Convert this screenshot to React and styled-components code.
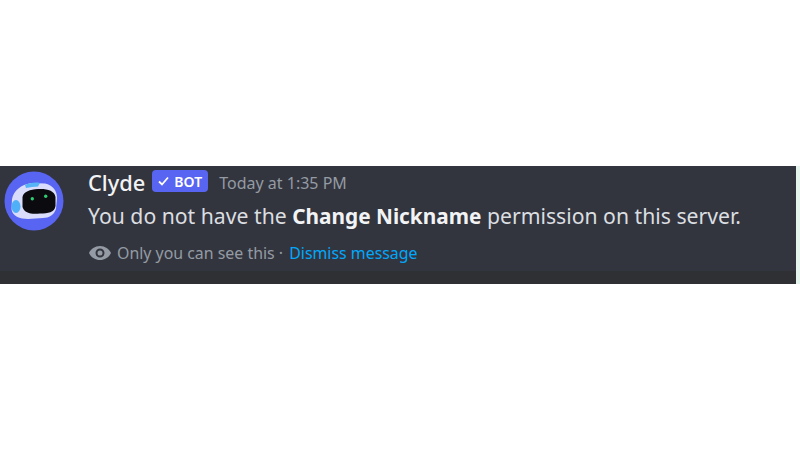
import React from 'react';
import styled, { createGlobalStyle } from 'styled-components';

const GlobalStyle = createGlobalStyle`
    html, body {
        margin: 0;
        padding: 0;
        background: #ffffff;
    }
    body {
        font-family: 'Noto Sans', 'Open Sans', sans-serif;
    }
`;

const Page = styled.div`
    width: 800px;
    height: 450px;
    overflow: hidden;
    padding-top: 166px;
    box-sizing: border-box;
`;

const Strip = styled.div`
    display: flex;
    height: 118px;
    background: #e6f4ee;
`;

const Message = styled.div`
    width: 796px;
    height: 118px;
    box-sizing: border-box;
    background: linear-gradient(#33353e 0, #33353e 105px, #2f3034 105px);
    display: flex;
    align-items: flex-start;
    padding: 5px 0 0 4px;
`;

const Avatar = styled.svg`
    width: 60px;
    height: 60px;
    flex: none;
`;

const Body = styled.div`
    margin-left: 24px;
    display: flex;
    flex-direction: column;
`;

const Header = styled.div`
    display: flex;
    align-items: center;
    height: 24px;
`;

const Name = styled.span`
    font-size: 21.8px;
    line-height: 24px;
    font-weight: 500;
    color: #f2f3f5;
`;

const BotTag = styled.span`
    margin-left: 7px;
    height: 22px;
    width: 56px;
    box-sizing: border-box;
    display: inline-flex;
    align-items: center;
    justify-content: center;
    gap: 5px;
    margin-top: -4px;
    border-radius: 4px;
    background: #5865f2;
    color: #ffffff;
    font-size: 14px;
    font-weight: 600;
`;

const Stamp = styled.span`
    margin-left: 11px;
    font-size: 16px;
    color: #949ba4;
`;

const Text = styled.div`
    margin-top: 7px;
    font-size: 21.2px;
    line-height: 28px;
    color: #dbdee1;
    white-space: nowrap;

    strong {
        font-size: 20.8px;
        font-weight: 700;
        color: #f2f3f5;
    }
`;

const Notice = styled.div`
    margin-top: 11px;
    display: flex;
    align-items: center;
    font-size: 15.9px;
    line-height: 22px;
    color: #949ba4;
    white-space: nowrap;
`;

const EyeIcon = styled.svg`
    width: 24px;
    height: 24px;
    margin-right: 5px;
    flex: none;
`;

const Dismiss = styled.a`
    margin-left: 2px;
    color: #00a8fc;
    text-decoration: none;
    cursor: pointer;
`;

const ClydeAvatar = () => (
    <Avatar viewBox="0 0 60 60">
        <circle cx="30" cy="30" r="29.5" fill="#5865f2" />
        <path d="M8 28 C10 19 17 14 27 12 L41 12.500 C49 14 53 20 53 27 L52 38 C50 44 45 47 39 47 L24 48 C16 48 8 45 7.500 38 Z" fill="#d9dcfb" />
        <path d="M21 14 C25 12 31 11 36 12 L34 15.500 C30 15.500 26 16 22 17 Z" fill="#55b4f5" />
        <ellipse cx="12" cy="35.500" rx="4.500" ry="6.500" fill="#4fb0f7" />
        <path d="M18.500 26 C19.500 20.500 26 18.500 34 18 C43 17.500 50.500 19.500 51.500 26 L51.500 35 C50.500 41.500 44 42.500 36 42.500 C28 43.500 20.500 42.500 18.500 36 Z" fill="#0b0b0f" />
        <circle cx="28.300" cy="27.700" r="1.700" fill="#2ecc71" />
        <circle cx="41.700" cy="25.200" r="1.700" fill="#2ecc71" />
    </Avatar>
);

const App = () => {
    return (
        <Page>
            <GlobalStyle />
            <Strip>
                <Message>
                    <ClydeAvatar />
                    <Body>
                        <Header>
                            <Name>Clyde</Name>
                            <BotTag>
                                <svg width="11" height="10" viewBox="0 0 11 10">
                                    <path d="M1 5.500 L4 8.500 L10 1.500" fill="none" stroke="#fff" strokeWidth="1.800" />
                                </svg>
                                BOT
                            </BotTag>
                            <Stamp>Today at 1:35 PM</Stamp>
                        </Header>
                        <Text>
                            You do not have the <strong>Change Nickname</strong> permission on this server.
                        </Text>
                        <Notice>
                            <EyeIcon viewBox="0 0 24 24">
                                <path
                                    fill="#949ba4"
                                    fillRule="evenodd"
                                    d="M12 5C7 5 2.800 8 1 12c1.800 4 6 7 11 7s9.200-3 11-7c-1.800-4-6-7-11-7zm0 11.500a4.500 4.500 0 1 1 0-9 4.500 4.500 0 0 1 0 9zm0-7a2.500 2.500 0 1 0 0 5 2.500 2.500 0 0 0 0-5z"
                                />
                            </EyeIcon>
                            Only you can see this ·&nbsp;<Dismiss>Dismiss message</Dismiss>
                        </Notice>
                    </Body>
                </Message>
            </Strip>
        </Page>
    );
};

export default App;
